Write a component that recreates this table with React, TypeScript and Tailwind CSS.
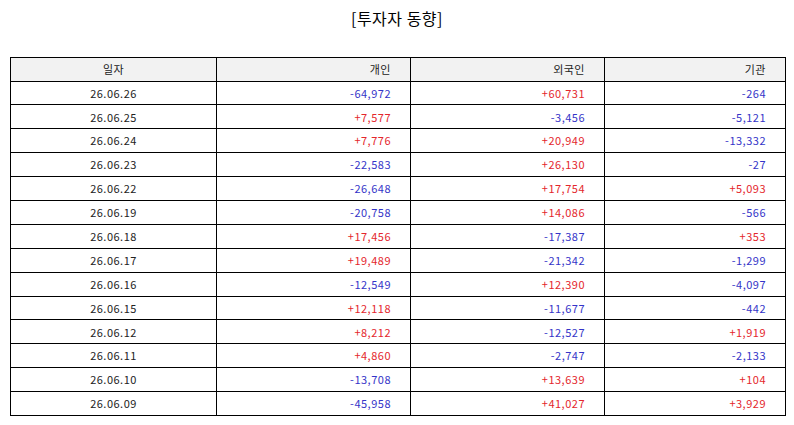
import React from 'react';

type Row = { date: string; person: number; foreign: number; inst: number };

const rows: Row[] = [
  { date: '26.06.26', person: -64972, foreign: 60731, inst: -264 },
  { date: '26.06.25', person: 7577, foreign: -3456, inst: -5121 },
  { date: '26.06.24', person: 7776, foreign: 20949, inst: -13332 },
  { date: '26.06.23', person: -22583, foreign: 26130, inst: -27 },
  { date: '26.06.22', person: -26648, foreign: 17754, inst: 5093 },
  { date: '26.06.19', person: -20758, foreign: 14086, inst: -566 },
  { date: '26.06.18', person: 17456, foreign: -17387, inst: 353 },
  { date: '26.06.17', person: 19489, foreign: -21342, inst: -1299 },
  { date: '26.06.16', person: -12549, foreign: 12390, inst: -4097 },
  { date: '26.06.15', person: 12118, foreign: -11677, inst: -442 },
  { date: '26.06.12', person: 8212, foreign: -12527, inst: 1919 },
  { date: '26.06.11', person: 4860, foreign: -2747, inst: -2133 },
  { date: '26.06.10', person: -13708, foreign: 13639, inst: 104 },
  { date: '26.06.09', person: -45958, foreign: 41027, inst: 3929 },
];

function fmt(n: number) {
  const s = Math.abs(n).toLocaleString('en-US');
  return n > 0 ? `+${s}` : `-${s}`;
}

function NumCell({ value }: { value: number }) {
  return (
    <td
      className={`border border-black text-right pr-[19px] ${
        value > 0 ? 'text-[#e4262c]' : 'text-[#3434c8]'
      }`}
    >
      {fmt(value)}
    </td>
  );
}

export default function App() {
  return (
    <div
      className="w-[794px] h-[425px] bg-white text-[#222]"
      style={{ fontFamily: '"Noto Sans CJK KR", "Noto Sans", sans-serif' }}
    >
      <h1 className="pt-[6px] text-center text-[16px] leading-[24px] tracking-[0.5px] text-black">
        [투자자 동향]
      </h1>
      <div className="pt-[27px] px-[10px]">
        <table className="w-[775px] border-collapse table-fixed text-[11px] tracking-[0.5px]">
          <colgroup>
            <col className="w-[206px]" />
            <col className="w-[194px]" />
            <col className="w-[194px]" />
            <col className="w-[181px]" />
          </colgroup>
          <thead>
            <tr className="h-[23.5px] bg-[#f2f2f2]">
              <th className="border border-black font-normal text-center">일자</th>
              <th className="border border-black font-normal text-right pr-[19px]">개인</th>
              <th className="border border-black font-normal text-right pr-[19px]">외국인</th>
              <th className="border border-black font-normal text-right pr-[19px]">기관</th>
            </tr>
          </thead>
          <tbody>
            {rows.map((r) => (
              <tr key={r.date} className="h-[23.9px]">
                <td className="border border-black text-center">{r.date}</td>
                <NumCell value={r.person} />
                <NumCell value={r.foreign} />
                <NumCell value={r.inst} />
              </tr>
            ))}
          </tbody>
        </table>
      </div>
    </div>
  );
}
